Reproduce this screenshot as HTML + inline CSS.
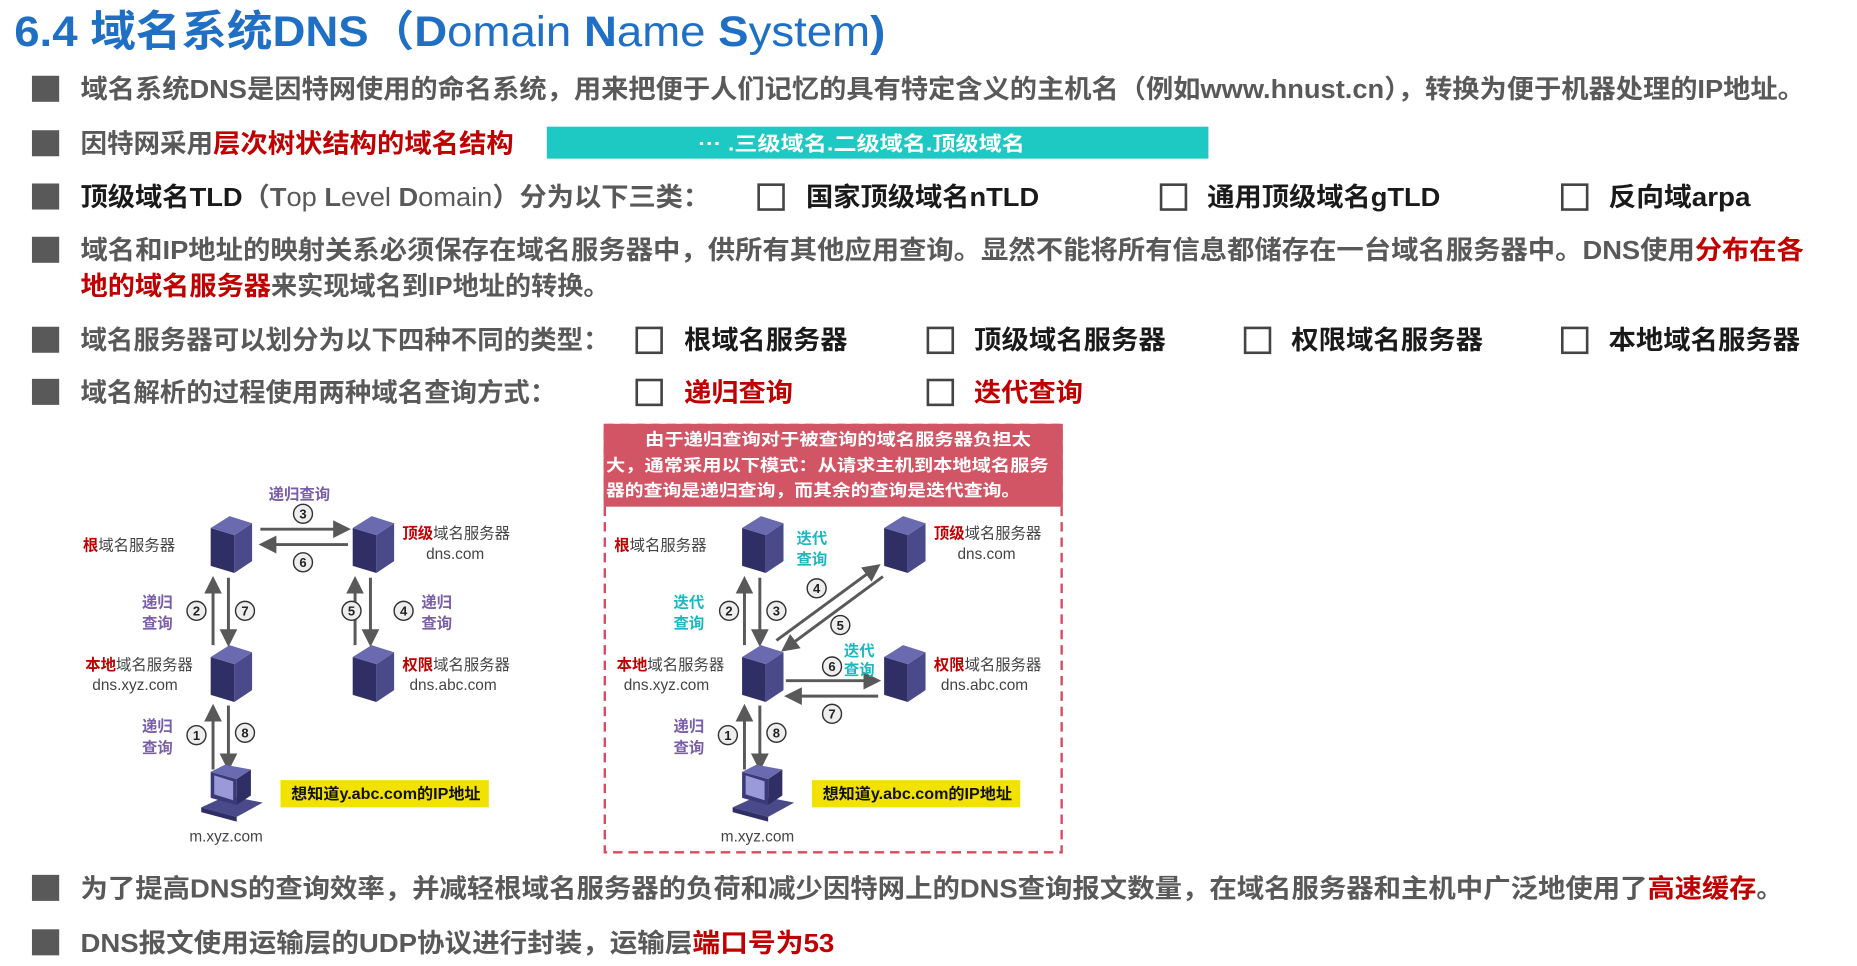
<!DOCTYPE html>
<html><head><meta charset="utf-8"><style>
html,body{margin:0;padding:0;background:#fff;width:1857px;height:966px;overflow:hidden}
svg{display:block}
text{font-family:"Liberation Sans","Noto Sans CJK SC",sans-serif}
.g{fill:#595959;font-weight:bold;font-size:22px}
.k{fill:#1a1a1a;font-weight:bold;font-size:22px}
.r{fill:#c00000;font-weight:bold;font-size:22px}
.s{font-size:13px;font-weight:bold}
.sg{fill:#444;font-size:13px}
.p{fill:#7a5fa8;font-size:13px;font-weight:bold}
.t{fill:#18b9c0;font-size:13px;font-weight:bold}
.n{font-size:11px;font-weight:bold;fill:#222}
</style></head><body>
<svg width="1857" height="966" viewBox="0 0 1569 816" preserveAspectRatio="none" xmlns="http://www.w3.org/2000/svg">
<defs>
<marker id="ah" markerWidth="6" markerHeight="6" refX="5" refY="3" orient="auto"><path d="M0,0 L6,3 L0,6 Z" fill="#595959"/></marker>
<g id="srv">
<polygon points="0,12 20,18 20,50 0,44" fill="#2f2f66"/>
<polygon points="20,18 35,8 35,40 20,50" fill="#4a4a8a"/>
<polygon points="0,12 16,2 35,8 20,18" fill="#6a6ab0"/>
</g>
<g id="pc">
<polygon points="0,36 30,44 52,32 22,26" fill="#4a4a8a"/>
<polygon points="0,36 30,44 30,48 0,40" fill="#2f2f66"/>
<polygon points="8,6 30,12 30,34 8,28" fill="#3a3a78"/>
<polygon points="11,9 27,14 27,30 11,25" fill="#9a9ad8"/>
<polygon points="30,12 42,4 42,26 30,34" fill="#2f2f66"/>
<polygon points="8,6 20,0 42,4 30,12" fill="#6a6ab0"/>
</g>
<g id="c"><circle r="8" fill="#eee" stroke="#333" stroke-width="1.2"/></g>
</defs>

<text x="12" y="39" font-size="36" font-weight="bold" fill="#1f6fc5" textLength="736" lengthAdjust="spacingAndGlyphs">6.4 域名系统DNS（D<tspan font-weight="normal">omain </tspan>N<tspan font-weight="normal">ame </tspan>S<tspan font-weight="normal">ystem</tspan>)</text>

<g fill="#595959">
<rect x="27" y="64" width="23" height="22"/>
<rect x="27" y="110" width="23" height="22"/>
<rect x="27" y="155" width="23" height="22"/>
<rect x="27" y="200" width="23" height="22"/>
<rect x="27" y="276" width="23" height="22"/>
<rect x="27" y="320" width="23" height="22"/>
<rect x="27" y="739" width="23" height="22"/>
<rect x="27" y="785" width="23" height="22"/>
</g>

<text class="g" x="68" y="83" textLength="1457" lengthAdjust="spacingAndGlyphs">域名系统DNS是因特网使用的命名系统，用来把便于人们记忆的具有特定含义的主机名（例如www.hnust.cn），转换为便于机器处理的IP地址。</text>

<text class="g" x="68" y="129" textLength="112" lengthAdjust="spacingAndGlyphs">因特网采用</text>
<text class="r" x="180" y="129" textLength="254" lengthAdjust="spacingAndGlyphs">层次树状结构的域名结构</text>
<rect x="462" y="107" width="559" height="27" fill="#1ec8c3"/>
<text x="590" y="127" font-size="17" font-weight="bold" fill="#fff" textLength="276" lengthAdjust="spacingAndGlyphs">··· .三级域名.二级域名.顶级域名</text>

<text class="k" x="68" y="174" textLength="137" lengthAdjust="spacingAndGlyphs">顶级域名TLD</text>
<text class="g" x="205" y="174" textLength="395" lengthAdjust="spacingAndGlyphs">（T<tspan font-weight="normal">op </tspan>L<tspan font-weight="normal">evel </tspan>D<tspan font-weight="normal">omain</tspan>）分为以下三类：</text>
<g fill="none" stroke="#444" stroke-width="2.2">
<rect x="641" y="156" width="21" height="21"/>
<rect x="981" y="156" width="21" height="21"/>
<rect x="1320" y="156" width="21" height="21"/>
<rect x="538" y="277" width="21" height="21"/>
<rect x="784" y="277" width="21" height="21"/>
<rect x="1052" y="277" width="21" height="21"/>
<rect x="1320" y="277" width="21" height="21"/>
<rect x="538" y="321" width="21" height="21"/>
<rect x="784" y="321" width="21" height="21"/>
</g>
<text class="k" x="681" y="174" textLength="197" lengthAdjust="spacingAndGlyphs">国家顶级域名nTLD</text>
<text class="k" x="1020" y="174" textLength="197" lengthAdjust="spacingAndGlyphs">通用顶级域名gTLD</text>
<text class="k" x="1359" y="174" textLength="120" lengthAdjust="spacingAndGlyphs">反向域arpa</text>

<text class="g" x="68" y="219" textLength="1364" lengthAdjust="spacingAndGlyphs">域名和IP地址的映射关系必须保存在域名服务器中，供所有其他应用查询。显然不能将所有信息都储存在一台域名服务器中。DNS使用</text>
<text class="r" x="1432" y="219" textLength="92" lengthAdjust="spacingAndGlyphs">分布在各</text>
<text class="r" x="68" y="249" textLength="161" lengthAdjust="spacingAndGlyphs">地的域名服务器</text>
<text class="g" x="229" y="249" textLength="286" lengthAdjust="spacingAndGlyphs">来实现域名到IP地址的转换。</text>

<text class="g" x="68" y="295" textLength="447" lengthAdjust="spacingAndGlyphs">域名服务器可以划分为以下四种不同的类型：</text>
<text class="k" x="578" y="295" textLength="138" lengthAdjust="spacingAndGlyphs">根域名服务器</text>
<text class="k" x="823" y="295" textLength="162" lengthAdjust="spacingAndGlyphs">顶级域名服务器</text>
<text class="k" x="1091" y="295" textLength="162" lengthAdjust="spacingAndGlyphs">权限域名服务器</text>
<text class="k" x="1359" y="295" textLength="162" lengthAdjust="spacingAndGlyphs">本地域名服务器</text>

<text class="g" x="68" y="339" textLength="402" lengthAdjust="spacingAndGlyphs">域名解析的过程使用两种域名查询方式：</text>
<text class="r" x="578" y="339" textLength="92" lengthAdjust="spacingAndGlyphs">递归查询</text>
<text class="r" x="823" y="339" textLength="92" lengthAdjust="spacingAndGlyphs">迭代查询</text>

<text class="g" x="68" y="758" textLength="1324" lengthAdjust="spacingAndGlyphs">为了提高DNS的查询效率，并减轻根域名服务器的负荷和减少因特网上的DNS查询报文数量，在域名服务器和主机中广泛地使用了</text>
<text class="r" x="1392" y="758" textLength="92" lengthAdjust="spacingAndGlyphs">高速缓存</text>
<text class="g" x="1484" y="758">。</text>
<text class="g" x="68" y="804" textLength="517" lengthAdjust="spacingAndGlyphs">DNS报文使用运输层的UDP协议进行封装，运输层</text>
<text class="r" x="585" y="804" textLength="120" lengthAdjust="spacingAndGlyphs">端口号为53</text>

<g>
<text class="p" x="227" y="422">递归查询</text>
<use href="#c" x="256" y="434"/><text class="n" x="256" y="438" text-anchor="middle">3</text>
<line x1="220" y1="447" x2="294" y2="447" stroke="#595959" stroke-width="2.5" marker-end="url(#ah)"/>
<line x1="294" y1="460" x2="221" y2="460" stroke="#595959" stroke-width="2.5" marker-end="url(#ah)"/>
<use href="#c" x="256" y="475"/><text class="n" x="256" y="479" text-anchor="middle">6</text>
<use href="#srv" x="178" y="434"/>
<use href="#srv" x="298" y="434"/>
<text class="s" x="70" y="465"><tspan fill="#c00000">根</tspan><tspan fill="#444" font-weight="normal">域名服务器</tspan></text>
<text class="s" x="340" y="455"><tspan fill="#c00000">顶级</tspan><tspan fill="#444" font-weight="normal">域名服务器</tspan></text>
<text class="sg" x="360" y="472">dns.com</text>

<line x1="180" y1="545" x2="180" y2="489" stroke="#595959" stroke-width="2.5" marker-end="url(#ah)"/>
<line x1="193" y1="488" x2="193" y2="544" stroke="#595959" stroke-width="2.5" marker-end="url(#ah)"/>
<use href="#c" x="166" y="516"/><text class="n" x="166" y="520" text-anchor="middle">2</text>
<use href="#c" x="207" y="516"/><text class="n" x="207" y="520" text-anchor="middle">7</text>
<text class="p" x="120" y="513">递归</text><text class="p" x="120" y="531">查询</text>

<line x1="300" y1="545" x2="300" y2="489" stroke="#595959" stroke-width="2.5" marker-end="url(#ah)"/>
<line x1="313" y1="488" x2="313" y2="544" stroke="#595959" stroke-width="2.5" marker-end="url(#ah)"/>
<use href="#c" x="297" y="516"/><text class="n" x="297" y="520" text-anchor="middle">5</text>
<use href="#c" x="341" y="516"/><text class="n" x="341" y="520" text-anchor="middle">4</text>
<text class="p" x="356" y="513">递归</text><text class="p" x="356" y="531">查询</text>

<use href="#srv" x="178" y="543"/>
<use href="#srv" x="298" y="543"/>
<text class="s" x="72" y="566"><tspan fill="#c00000">本地</tspan><tspan fill="#444" font-weight="normal">域名服务器</tspan></text>
<text class="sg" x="78" y="583">dns.xyz.com</text>
<text class="s" x="340" y="566"><tspan fill="#c00000">权限</tspan><tspan fill="#444" font-weight="normal">域名服务器</tspan></text>
<text class="sg" x="346" y="583">dns.abc.com</text>

<line x1="180" y1="650" x2="180" y2="597" stroke="#595959" stroke-width="2.5" marker-end="url(#ah)"/>
<line x1="193" y1="596" x2="193" y2="649" stroke="#595959" stroke-width="2.5" marker-end="url(#ah)"/>
<use href="#c" x="166" y="621"/><text class="n" x="166" y="625" text-anchor="middle">1</text>
<use href="#c" x="207" y="619"/><text class="n" x="207" y="623" text-anchor="middle">8</text>
<text class="p" x="120" y="618">递归</text><text class="p" x="120" y="636">查询</text>
<use href="#pc" x="170" y="646"/>
<text class="sg" x="160" y="711">m.xyz.com</text>
<rect x="237" y="659" width="176" height="23" fill="#f2e200"/>
<text x="246" y="675" font-size="13" font-weight="bold" fill="#111" textLength="160" lengthAdjust="spacingAndGlyphs">想知道y.abc.com的IP地址</text>
</g>

<rect x="511" y="359" width="386" height="361" fill="none" stroke="#d84a5e" stroke-width="2" stroke-dasharray="8,5"/>
<rect x="510" y="358" width="388" height="70" fill="#d25566"/>
<g fill="#fff" font-size="14" font-weight="bold">
<text x="545" y="376" textLength="326" lengthAdjust="spacingAndGlyphs">由于递归查询对于被查询的域名服务器负担太</text>
<text x="512" y="398" textLength="374" lengthAdjust="spacingAndGlyphs">大，通常采用以下模式：从请求主机到本地域名服务</text>
<text x="512" y="419" textLength="350" lengthAdjust="spacingAndGlyphs">器的查询是递归查询，而其余的查询是迭代查询。</text>
</g>
<g>
<use href="#srv" x="627" y="434"/>
<use href="#srv" x="747" y="434"/>
<text class="s" x="519" y="465"><tspan fill="#c00000">根</tspan><tspan fill="#444" font-weight="normal">域名服务器</tspan></text>
<text class="t" x="673" y="459">迭代</text><text class="t" x="673" y="477">查询</text>
<text class="s" x="789" y="455"><tspan fill="#c00000">顶级</tspan><tspan fill="#444" font-weight="normal">域名服务器</tspan></text>
<text class="sg" x="809" y="472">dns.com</text>

<line x1="629" y1="545" x2="629" y2="489" stroke="#595959" stroke-width="2.5" marker-end="url(#ah)"/>
<line x1="642" y1="488" x2="642" y2="544" stroke="#595959" stroke-width="2.5" marker-end="url(#ah)"/>
<use href="#c" x="616" y="516"/><text class="n" x="616" y="520" text-anchor="middle">2</text>
<use href="#c" x="656" y="516"/><text class="n" x="656" y="520" text-anchor="middle">3</text>
<text class="t" x="569" y="513">迭代</text><text class="t" x="569" y="531">查询</text>
<line x1="656" y1="541" x2="742" y2="478" stroke="#595959" stroke-width="2.5" marker-end="url(#ah)"/>
<line x1="746" y1="487" x2="662" y2="549" stroke="#595959" stroke-width="2.5" marker-end="url(#ah)"/>
<use href="#c" x="690" y="497"/><text class="n" x="690" y="501" text-anchor="middle">4</text>
<use href="#c" x="710" y="528"/><text class="n" x="710" y="532" text-anchor="middle">5</text>

<use href="#srv" x="627" y="543"/>
<use href="#srv" x="747" y="543"/>
<text class="s" x="521" y="566"><tspan fill="#c00000">本地</tspan><tspan fill="#444" font-weight="normal">域名服务器</tspan></text>
<text class="sg" x="527" y="583">dns.xyz.com</text>
<text class="s" x="789" y="566"><tspan fill="#c00000">权限</tspan><tspan fill="#444" font-weight="normal">域名服务器</tspan></text>
<text class="sg" x="795" y="583">dns.abc.com</text>
<line x1="664" y1="575" x2="742" y2="575" stroke="#595959" stroke-width="2.5" marker-end="url(#ah)"/>
<line x1="742" y1="588" x2="665" y2="588" stroke="#595959" stroke-width="2.5" marker-end="url(#ah)"/>
<use href="#c" x="703" y="563"/><text class="n" x="703" y="567" text-anchor="middle">6</text>
<text class="t" x="713" y="554">迭代</text><text class="t" x="713" y="570">查询</text>
<use href="#c" x="703" y="603"/><text class="n" x="703" y="607" text-anchor="middle">7</text>

<line x1="629" y1="650" x2="629" y2="597" stroke="#595959" stroke-width="2.5" marker-end="url(#ah)"/>
<line x1="642" y1="596" x2="642" y2="649" stroke="#595959" stroke-width="2.5" marker-end="url(#ah)"/>
<use href="#c" x="615" y="621"/><text class="n" x="615" y="625" text-anchor="middle">1</text>
<use href="#c" x="656" y="619"/><text class="n" x="656" y="623" text-anchor="middle">8</text>
<text class="p" x="569" y="618">递归</text><text class="p" x="569" y="636">查询</text>
<use href="#pc" x="619" y="646"/>
<text class="sg" x="609" y="711">m.xyz.com</text>
<rect x="686" y="659" width="176" height="23" fill="#f2e200"/>
<text x="695" y="675" font-size="13" font-weight="bold" fill="#111" textLength="160" lengthAdjust="spacingAndGlyphs">想知道y.abc.com的IP地址</text>
</g>
</svg>
</body></html>
